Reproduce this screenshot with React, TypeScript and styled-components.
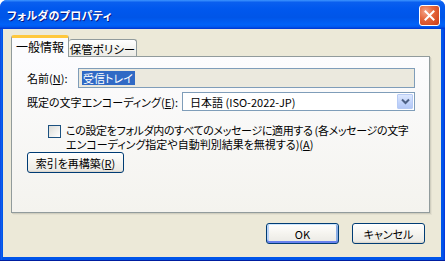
import React from "react";
import styled, { createGlobalStyle } from "styled-components";

const Global = createGlobalStyle`
  html, body { margin: 0; padding: 0; background: #ffffff; }
  body {
    font-family: "Noto Sans CJK JP", "DejaVu Sans", sans-serif;
    font-size: 11px;
    color: #000;
    font-feature-settings: "palt";
  }
`;

const Window = styled.div`
  width: 445px;
  height: 261px;
  box-sizing: border-box;
  display: flex;
  flex-direction: column;
  background: linear-gradient(to right, #0831d9 0, #166aee 1px, #0055ea 2px, #0055ea calc(100% - 2px), #0831d9 100%);
  border-radius: 7px 7px 0 0;
  overflow: hidden;
  border-bottom: 1px solid #001ea0;
`;

const TitleBar = styled.div`
  height: 29px;
  flex: none;
  display: flex;
  align-items: center;
  justify-content: space-between;
  padding: 0 5px 0 7px;
  background: linear-gradient(
    to bottom,
    #3d95ff 0%,
    #0a5fef 8%,
    #0058ee 30%,
    #0055e8 60%,
    #0062f8 85%,
    #0058ee 93%,
    #003dd7 97%,
    #003dd7 100%
  );
`;

const Title = styled.span`
  color: #fff;
  font-weight: bold;
  font-size: 11px;
  letter-spacing: 0.3px;
  text-shadow: 1px 1px 0 #0a1883;
  margin-top: 1px;
`;

const CloseButton = styled.div`
  width: 21px;
  height: 21px;
  box-sizing: border-box;
  border: 1px solid #fff;
  border-radius: 3px;
  background: radial-gradient(circle at 30% 30%, #f5a58a 0%, #e5683e 40%, #cc3a14 100%);
  display: flex;
  align-items: center;
  justify-content: center;
  margin-top: 1px;
`;

const Client = styled.div`
  flex: 1;
  margin: 0 4px 3px 3px;
  background: #ece9d8;
  display: flex;
  flex-direction: column;
  padding: 7px 11px 0 8px;
`;

const Tabs = styled.div`
  display: flex;
  align-items: flex-end;
  height: 21px;
  position: relative;
  z-index: 1;
  margin-bottom: -1px;
`;

const Tab = styled.div<{ $active?: boolean }>`
  box-sizing: border-box;
  display: flex;
  align-items: center;
  justify-content: center;
  border: 1px solid #919b9c;
  border-bottom: none;
  border-radius: 3px 3px 0 0;
  line-height: 14px;
  white-space: nowrap;
  ${(p) =>
    p.$active
      ? `
    height: 22px;
    width: 58px;
    font-size: 12px;
    background: #fcfcfe;
    border-top: 3px solid #ffc83c;
    padding-bottom: 2px;
  `
      : `
    height: 17px;
    width: 68px;
    font-size: 11.5px;
    background: linear-gradient(to bottom, #ffffff, #f3f3ef 60%, #ecebe6);
    border-left: none;
    margin-bottom: 1px;
    padding-top: 1px;
  `}
`;

const Panel = styled.div`
  width: 419px;
  height: 157px;
  box-sizing: border-box;
  border: 1px solid #919b9c;
  background: linear-gradient(to bottom, #fcfcfe, #f4f3ee);
  box-shadow: 1px 1px 0 #d0cebf, 2px 2px 0 #e3e0d0;
  padding: 11px 14px 0 15px;
  display: flex;
  flex-direction: column;
`;

const Row = styled.div<{ $gap?: number }>`
  display: flex;
  align-items: center;
  margin-bottom: ${(p) => p.$gap ?? 4}px;
`;

const Label = styled.span<{ $w: number }>`
  width: ${(p) => p.$w}px;
  flex: none;
  white-space: nowrap;
`;

const U = styled.span`
  text-decoration: underline;
  text-underline-offset: 1px;
`;

const TextInput = styled.div`
  flex: 1;
  height: 20px;
  box-sizing: border-box;
  border: 1px solid #7f9db9;
  background: #ebe9de;
  display: flex;
  align-items: center;
  padding-left: 3px;
`;

const Selected = styled.span`
  background: #316ac5;
  color: #fff;
  line-height: 14px;
  padding: 0 2px 0 1px;
`;

const Select = styled.div`
  flex: 1;
  height: 19px;
  box-sizing: border-box;
  border: 1px solid #7f9db9;
  background: #fff;
  display: flex;
  align-items: center;
  justify-content: space-between;
  padding: 0 1px 0 7px;
`;

const ArrowButton = styled.div`
  width: 16px;
  height: 15px;
  box-sizing: border-box;
  border: 1px solid #b7cbf5;
  border-radius: 1px;
  background: linear-gradient(to bottom, #dde8fe, #c1d3fb 60%, #b4c8f6);
  display: flex;
  align-items: center;
  justify-content: center;
`;

const CheckRow = styled.div`
  display: flex;
  align-items: flex-start;
  padding-left: 21px;
  margin-top: 8px;
  margin-bottom: 1px;
`;

const CheckBox = styled.div`
  width: 13px;
  height: 13px;
  box-sizing: border-box;
  border: 1px solid #1c5180;
  background: linear-gradient(135deg, #dcdcd7, #ffffff);
  flex: none;
  margin-top: 2px;
  margin-right: 5px;
`;

const CheckText = styled.div`
  line-height: 14px;
  white-space: nowrap;
`;

const TightLine = styled.span<{ $ls: number }>`
  letter-spacing: ${(p) => p.$ls}px;
`;

const Button = styled.div<{ $w: number; $default?: boolean }>`
  width: ${(p) => p.$w}px;
  height: 21px;
  box-sizing: border-box;
  border: 1px solid #003c74;
  border-radius: 3px;
  background: linear-gradient(to bottom, #ffffff 0%, #f5f4ef 50%, #ecebe6 90%, #d6d0c5 100%);
  display: flex;
  align-items: center;
  justify-content: center;
  white-space: nowrap;
  line-height: 14px;
  ${(p) =>
    p.$default
      ? `box-shadow: inset 0 1px 0 #cee7ff, inset 0 -2px 0 #6982ee, inset 1px 0 0 #bcd4f6, inset -1px 0 0 #89ade4, inset 2px 0 0 #bcd4f6, inset -2px 0 0 #89ade4;`
      : ``}
`;

const Footer = styled.div`
  display: flex;
  justify-content: flex-end;
  gap: 13px;
  margin-top: 10px;
  margin-right: -11px;
  padding-right: 16px;
`;

export default function App() {
  return (
    <>
      <Global />
      <Window>
        <TitleBar>
          <Title>フォルダのプロパティ</Title>
          <CloseButton>
            <svg width="11" height="11" viewBox="0 0 11 11">
              <path d="M1.5 1.5 L9.5 9.5 M9.5 1.5 L1.5 9.5" stroke="#fff" strokeWidth="2" strokeLinecap="square" />
            </svg>
          </CloseButton>
        </TitleBar>
        <Client>
          <Tabs>
            <Tab $active>一般情報</Tab>
            <Tab>保管ポリシー</Tab>
          </Tabs>
          <Panel>
            <Row>
              <Label $w={51}>
                名前(<U>N</U>):
              </Label>
              <TextInput>
                <Selected>受信トレイ</Selected>
              </TextInput>
            </Row>
            <Row>
              <Label $w={155}>
                既定の文字エンコーディング(<U>E</U>):
              </Label>
              <Select>
                <span>日本語 (ISO-2022-JP)</span>
                <ArrowButton>
                  <svg width="9" height="7" viewBox="0 0 9 7">
                    <path d="M1 1.5 L4.5 5 L8 1.5" stroke="#4d6185" strokeWidth="2" fill="none" />
                  </svg>
                </ArrowButton>
              </Select>
            </Row>
            <CheckRow>
              <CheckBox />
              <CheckText>
                <TightLine $ls={-0.35}>この設定をフォルダ内のすべてのメッセージに適用する (各メッセージの文字</TightLine>
                <br />
                エンコーディング指定や自動判別結果を無視する)(<U>A</U>)
              </CheckText>
            </CheckRow>
            <Row>
              <Button $w={97}>
                索引を再構築(<U>R</U>)
              </Button>
            </Row>
          </Panel>
          <Footer>
            <Button $w={73} $default>
              OK
            </Button>
            <Button $w={73}>キャンセル</Button>
          </Footer>
        </Client>
      </Window>
    </>
  );
}
